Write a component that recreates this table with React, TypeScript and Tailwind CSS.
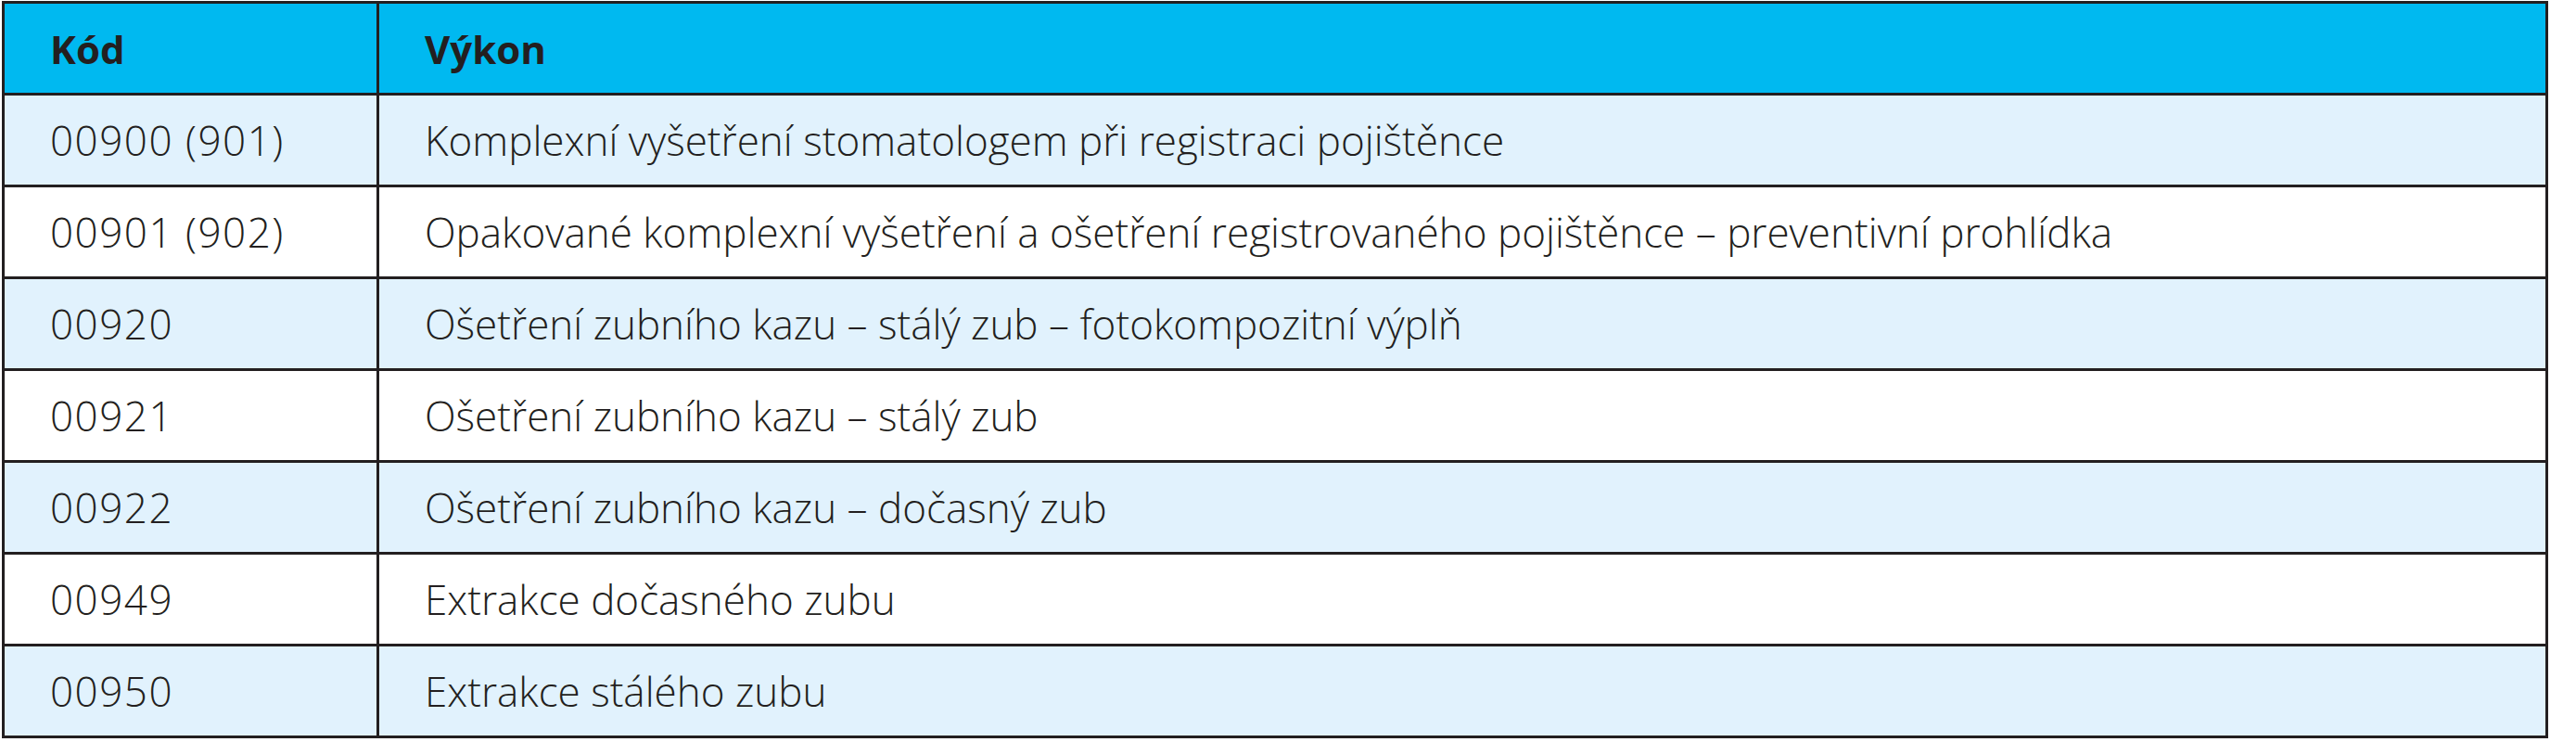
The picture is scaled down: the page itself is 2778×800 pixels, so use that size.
const rows = [
  ["00900 (901)", "Komplexní vyšetření stomatologem při registraci pojištěnce"],
  ["00901 (902)", "Opakované komplexní vyšetření a ošetření registrovaného pojištěnce – preventivní prohlídka"],
  ["00920", "Ošetření zubního kazu – stálý zub – fotokompozitní výplň"],
  ["00921", "Ošetření zubního kazu – stálý zub"],
  ["00922", "Ošetření zubního kazu – dočasný zub"],
  ["00949", "Extrakce dočasného zubu"],
  ["00950", "Extrakce stálého zubu"],
]

export default function App() {
  return (
    <div className="w-[2778px] h-[800px] bg-white pl-[2px] pt-[1px]">
      <table className="w-[2746px] border-collapse text-[44px] text-[#231f20] font-['Open_Sans',sans-serif] font-light">
        <thead>
          <tr className="h-[99px] bg-[#00b9f0]">
            <th className="w-[404px] border-[3px] border-[#231f20] pl-[49px] text-left font-bold text-[42px]">Kód</th>
            <th className="border-[3px] border-[#231f20] pl-[49px] text-left font-bold text-[42px]">Výkon</th>
          </tr>
        </thead>
        <tbody>
          {rows.map(([code, name], i) => (
            <tr key={code} className={"h-[99px] " + (i % 2 === 0 ? "bg-[#e1f2fd]" : "bg-white")}>
              <td className="border-[3px] border-[#231f20] pl-[49px] tracking-[1.5px]">{code}</td>
              <td className="border-[3px] border-[#231f20] pl-[49px]">{name}</td>
            </tr>
          ))}
        </tbody>
      </table>
    </div>
  )
}
